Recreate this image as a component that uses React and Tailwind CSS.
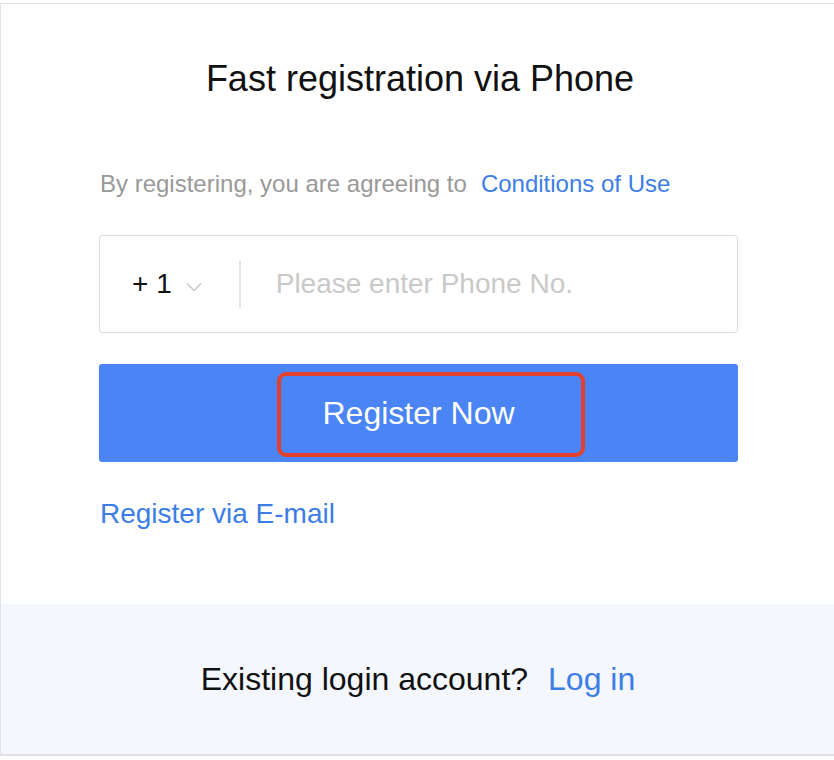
export default function App() {
  return (
    <div className="h-[760px] w-[834px] overflow-hidden bg-white font-['Liberation_Sans',Arial,sans-serif]">
      <div className="mt-[3px] w-[840px] border border-b-2 border-[#e2e2e2] bg-white">
        {/* form area */}
        <div className="flex h-[600px] flex-col px-[98px] pt-[57px]">
          <h1 className="text-center text-[36px] leading-[36px] font-normal text-[#111]">
            Fast registration via Phone
          </h1>

          <p className="mt-[75px] pl-px text-[24px] leading-[24px] text-[#999]">
            By registering, you are agreeing to
            <a href="#" className="ml-3.5 text-[#3d7de6]">
              Conditions of Use
            </a>
          </p>

          <div className="mt-[39px] flex h-[98px] w-[639px] items-center rounded-[3px] border border-[#dcdcdc] pl-[32px]">
            <span className="text-[28px] leading-[28px] text-[#111]">+ 1</span>
            <svg width="16" height="10" viewBox="0 0 16 10" className="ml-[14px] mt-[6px]">
              <polyline points="1,1.5 8,8.5 15,1.5" fill="none" stroke="#c4c4c4" strokeWidth="1.3" />
            </svg>
            <span className="ml-[37px] h-[47px] w-[2px] bg-[#e4e4e4]" />
            <input
              className="ml-[35px] flex-1 bg-transparent text-[28px] leading-[28px] text-[#111] outline-none placeholder:text-[#c9c9c9]"
              placeholder="Please enter Phone No."
            />
          </div>

          <button className="relative mt-[31px] flex h-[98px] w-[639px] items-center justify-center rounded-[3px] bg-[#4a84f5] text-[32px] leading-[32px] text-white">
            Register Now
            <span className="absolute left-[178px] top-[8px] h-[85px] w-[308px] rounded-[9px] border-[4px] border-[#e3402e]" />
          </button>

          <a href="#" className="mt-[38px] pl-px text-[28px] leading-[28px] text-[#3d7de6]">
            Register via E-mail
          </a>
        </div>

        {/* footer */}
        <div className="flex h-[150px] items-center justify-center bg-[#f4f7fd] pr-[4px] text-[32px] leading-[32px] text-[#111]">
          Existing login account?
          <a href="#" className="ml-5 text-[#3d7de6]">
            Log in
          </a>
        </div>
      </div>
    </div>
  )
}
